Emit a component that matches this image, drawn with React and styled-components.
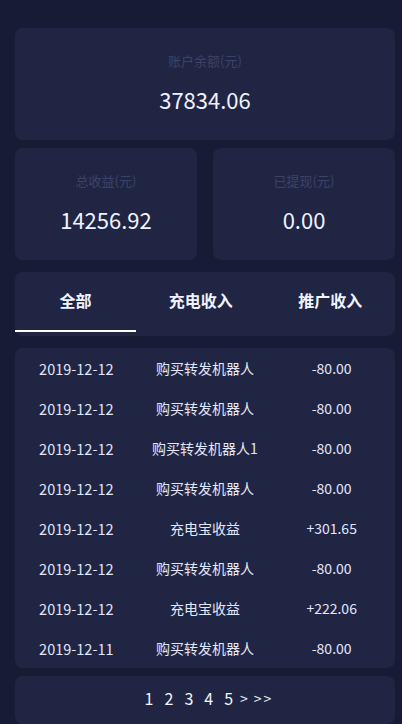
import React, { useState } from 'react';
import styled, { createGlobalStyle } from 'styled-components';

const GlobalStyle = createGlobalStyle`
  html, body {
    margin: 0;
    padding: 0;
    background: #171b36;
  }
  html {
    scrollbar-width: none;
  }
  html::-webkit-scrollbar {
    display: none;
  }
  body {
    font-family: "Noto Sans CJK SC", "Noto Sans", sans-serif;
    color: #e6ecff;
  }
`;

const Page = styled.div`
  display: flex;
  flex-direction: column;
  padding: 28px 7px 12px 15px;
  background: #171b36;
  min-height: 724px;
  box-sizing: border-box;
`;

const Card = styled.div`
  background: #212544;
  border-radius: 8px;
  margin-top: ${(p) => p.$gap || 0}px;
`;

const StatCard = styled(Card)`
  display: flex;
  flex-direction: column;
  align-items: center;
  height: 112px;
  box-sizing: border-box;
  padding-top: 23px;
`;

const StatLabel = styled.div`
  font-size: 13px;
  line-height: 20px;
  color: #3b4468;
`;

const StatValue = styled.div`
  margin-top: 14px;
  font-size: 22px;
  line-height: 28px;
  color: #eef3ff;
`;

const StatRow = styled.div`
  display: grid;
  grid-template-columns: 1fr 1fr;
  gap: 16px;
  margin-top: 8px;
`;

const Tabs = styled(Card)`
  display: grid;
  grid-template-columns: 121px 1fr 1fr;
  height: 64px;
`;

const Tab = styled.button`
  border: 0;
  background: none;
  padding: 0;
  font-family: inherit;
  font-size: 16px;
  font-weight: bold;
  color: #eef3ff;
  cursor: pointer;
  border-bottom: 2px solid ${(p) => (p.$active ? '#ffffff' : 'transparent')};
  margin-bottom: 4px;
  padding-bottom: 2px;
`;

const List = styled(Card)`
  padding: 0;
`;

const Row = styled.div`
  display: grid;
  grid-template-columns: 1fr 1fr 1fr;
  height: 40px;
  align-items: center;
  font-size: 14px;
  color: #e0e7fb;

  > span {
    text-align: center;
  }
  > span:first-child {
    padding-right: 4px;
    font-size: 14.5px;
  }
`;

const Pager = styled(Card)`
  display: flex;
  justify-content: center;
  align-items: center;
  height: 48px;
  padding-left: 8px;
  padding-bottom: 4px;
  box-sizing: border-box;
  gap: 11px;
`;

const PageLink = styled.span`
  font-size: ${(p) => (p.$arrow ? 14 : 16)}px;
  letter-spacing: ${(p) => (p.$arrow ? 2 : 0)}px;
  color: #f2f5ff;
  margin-left: ${(p) => p.$shift || 0}px;
  cursor: pointer;
`;

const records = [
  ['2019-12-12', '购买转发机器人', '-80.00'],
  ['2019-12-12', '购买转发机器人', '-80.00'],
  ['2019-12-12', '购买转发机器人1', '-80.00'],
  ['2019-12-12', '购买转发机器人', '-80.00'],
  ['2019-12-12', '充电宝收益', '+301.65'],
  ['2019-12-12', '购买转发机器人', '-80.00'],
  ['2019-12-12', '充电宝收益', '+222.06'],
  ['2019-12-11', '购买转发机器人', '-80.00'],
];

const tabs = ['全部', '充电收入', '推广收入'];

export default function App() {
  const [active, setActive] = useState(0);

  return (
    <>
      <GlobalStyle />
      <Page>
        <StatCard>
          <StatLabel>账户余额(元)</StatLabel>
          <StatValue>37834.06</StatValue>
        </StatCard>
        <StatRow>
          <StatCard>
            <StatLabel>总收益(元)</StatLabel>
            <StatValue>14256.92</StatValue>
          </StatCard>
          <StatCard>
            <StatLabel>已提现(元)</StatLabel>
            <StatValue>0.00</StatValue>
          </StatCard>
        </StatRow>
        <Tabs $gap={12}>
          {tabs.map((t, i) => (
            <Tab key={t} $active={i === active} onClick={() => setActive(i)}>
              {t}
            </Tab>
          ))}
        </Tabs>
        <List $gap={12}>
          {records.map((r, i) => (
            <Row key={i}>
              <span>{r[0]}</span>
              <span>{r[1]}</span>
              <span>{r[2]}</span>
            </Row>
          ))}
        </List>
        <Pager $gap={8}>
          {[1, 2, 3, 4, 5].map((n) => (
            <PageLink key={n}>{n}</PageLink>
          ))}
          <PageLink $arrow $shift={-4}>&gt;</PageLink>
          <PageLink $arrow $shift={-7}>&gt;&gt;</PageLink>
        </Pager>
      </Page>
    </>
  );
}
